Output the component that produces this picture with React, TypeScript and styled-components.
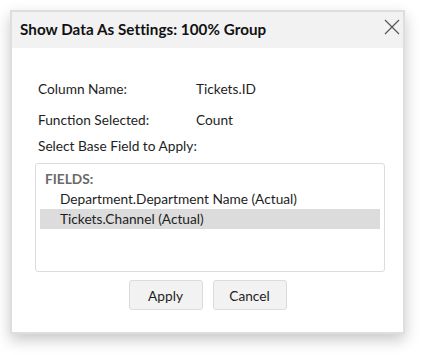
import React from "react";
import styled, { createGlobalStyle } from "styled-components";

const Global = createGlobalStyle`
  html, body { margin: 0; padding: 0; background: #ffffff; }
  body { font-family: Lato, "Open Sans", Arial, sans-serif; color: #1e1e1e; }
`;

const Page = styled.div`
  width: 425px;
  height: 355px;
  padding: 10px 0 0 10px;
  box-sizing: border-box;
`;

const Dialog = styled.div`
  width: 395px;
  height: 324px;
  box-sizing: border-box;
  border: 2px solid #dedede;
  background: #fff;
  box-shadow: 0 6px 14px rgba(0, 0, 0, 0.22);
  display: flex;
  flex-direction: column;
`;

const Header = styled.div`
  height: 36px;
  background: #f2f2f2;
  display: flex;
  align-items: center;
  justify-content: space-between;
  padding: 0 1px 2px 8px;
  box-sizing: border-box;
`;

const Title = styled.h1`
  margin: 0;
  font-size: 15.2px;
  font-weight: 700;
  color: #111;
  letter-spacing: 0.05px;
`;

const Close = styled.button`
  border: none;
  background: transparent;
  padding: 0;
  width: 20px;
  height: 20px;
  display: flex;
  align-items: center;
  justify-content: center;
  margin-top: -4px;
`;

const Body = styled.div`
  padding: 31px 20px 0 26px;
  display: flex;
  flex-direction: column;
  font-size: 13.7px;
`;

const InfoRow = styled.div`
  display: grid;
  grid-template-columns: 158px 1fr;
  height: 18px;
  align-items: center;
  margin-bottom: 13px;
`;

const Label = styled.div`
  margin-top: -4px;
  margin-bottom: 9px;
`;

const ListBox = styled.div`
  width: 350px;
  height: 109px;
  margin-left: -3px;
  box-sizing: border-box;
  border: 1px solid #dcdcdc;
  border-radius: 3px;
  padding: 6px 4px 0 4px;
`;

const Heading = styled.div`
  font-weight: 700;
  color: #6a6a6a;
  padding-left: 5px;
  height: 18px;
  line-height: 18px;
  margin-bottom: 1px;
`;

const Item = styled.div<{ $selected?: boolean }>`
  height: 20px;
  line-height: 20px;
  padding-left: 20px;
  background: ${(p) => (p.$selected ? "#dcdcdc" : "transparent")};
`;

const Buttons = styled.div`
  display: flex;
  justify-content: center;
  gap: 10px;
  margin-top: 8px;
  padding-right: 6px;
`;

const Btn = styled.button`
  width: 74px;
  height: 30px;
  box-sizing: border-box;
  background: #f2f2f2;
  border: 1px solid #dcdcdc;
  border-radius: 3px;
  font-family: Lato, "Open Sans", Arial, sans-serif;
  font-size: 13.7px;
  color: #1e1e1e;
  padding: 0;
`;

export default function App() {
  return (
    <Page>
      <Global />
      <Dialog>
        <Header>
          <Title>Show Data As Settings: 100% Group</Title>
          <Close aria-label="Close">
            <svg width="16" height="16" viewBox="0 0 16 16">
              <path d="M1 1 L15 15 M15 1 L1 15" stroke="#555" strokeWidth="1.2" fill="none" />
            </svg>
          </Close>
        </Header>
        <Body>
          <InfoRow>
            <span>Column Name:</span>
            <span>Tickets.ID</span>
          </InfoRow>
          <InfoRow>
            <span>Function Selected:</span>
            <span>Count</span>
          </InfoRow>
          <Label>Select Base Field to Apply:</Label>
          <ListBox>
            <Heading>FIELDS:</Heading>
            <Item>Department.Department Name (Actual)</Item>
            <Item $selected>Tickets.Channel (Actual)</Item>
          </ListBox>
          <Buttons>
            <Btn>Apply</Btn>
            <Btn>Cancel</Btn>
          </Buttons>
        </Body>
      </Dialog>
    </Page>
  );
}
